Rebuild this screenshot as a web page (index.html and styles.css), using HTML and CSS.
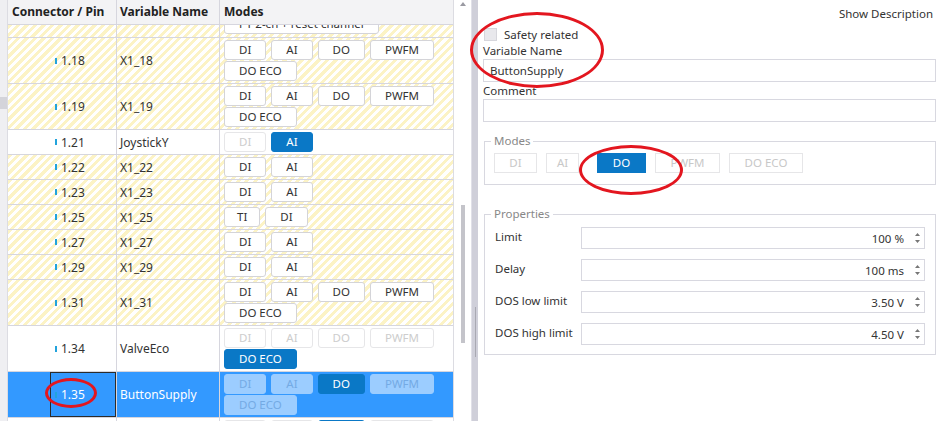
FILE: index.html
```html
<!DOCTYPE html>
<html>
<head>
    <title>IO Configuration</title>
    <link rel="stylesheet" href="styles.css">
</head>
<body>
    <div class="app">
        <div class="edge"><span class="edge-mark"></span></div>

        <!-- Pin table -->
        <div class="grid">
            <div class="head">
                <div>Connector / Pin</div>
                <div>Variable Name</div>
                <div>Modes</div>
            </div>

            <div class="row stripe cut">
                <div class="gap"></div>
                <div class="pin"></div>
                <div class="name"></div>
                <div class="modes"><span class="btn">PT 2-ch + reset channel</span></div>
            </div>

            <div class="row stripe">
                <div class="gap"></div>
                <div class="pin"><i class="tick"></i>1.18</div>
                <div class="name">X1_18</div>
                <div class="modes">
                    <span class="btn">DI</span><span class="btn">AI</span><span class="btn">DO</span><span class="btn">PWFM</span><span class="btn">DO ECO</span>
                </div>
            </div>

            <div class="row stripe">
                <div class="gap"></div>
                <div class="pin"><i class="tick"></i>1.19</div>
                <div class="name">X1_19</div>
                <div class="modes">
                    <span class="btn">DI</span><span class="btn">AI</span><span class="btn">DO</span><span class="btn">PWFM</span><span class="btn">DO ECO</span>
                </div>
            </div>

            <div class="row">
                <div class="gap"></div>
                <div class="pin"><i class="tick"></i>1.21</div>
                <div class="name">JoystickY</div>
                <div class="modes">
                    <span class="btn off">DI</span><span class="btn on">AI</span>
                </div>
            </div>

            <div class="row stripe">
                <div class="gap"></div>
                <div class="pin"><i class="tick"></i>1.22</div>
                <div class="name">X1_22</div>
                <div class="modes"><span class="btn">DI</span><span class="btn">AI</span></div>
            </div>

            <div class="row stripe">
                <div class="gap"></div>
                <div class="pin"><i class="tick"></i>1.23</div>
                <div class="name">X1_23</div>
                <div class="modes"><span class="btn">DI</span><span class="btn">AI</span></div>
            </div>

            <div class="row stripe">
                <div class="gap"></div>
                <div class="pin"><i class="tick"></i>1.25</div>
                <div class="name">X1_25</div>
                <div class="modes"><span class="btn narrow">TI</span><span class="btn">DI</span></div>
            </div>

            <div class="row stripe">
                <div class="gap"></div>
                <div class="pin"><i class="tick"></i>1.27</div>
                <div class="name">X1_27</div>
                <div class="modes"><span class="btn">DI</span><span class="btn">AI</span></div>
            </div>

            <div class="row stripe">
                <div class="gap"></div>
                <div class="pin"><i class="tick"></i>1.29</div>
                <div class="name">X1_29</div>
                <div class="modes"><span class="btn">DI</span><span class="btn">AI</span></div>
            </div>

            <div class="row stripe">
                <div class="gap"></div>
                <div class="pin"><i class="tick"></i>1.31</div>
                <div class="name">X1_31</div>
                <div class="modes">
                    <span class="btn">DI</span><span class="btn">AI</span><span class="btn">DO</span><span class="btn">PWFM</span><span class="btn">DO ECO</span>
                </div>
            </div>

            <div class="row">
                <div class="gap"></div>
                <div class="pin"><i class="tick"></i>1.34</div>
                <div class="name">ValveEco</div>
                <div class="modes">
                    <span class="btn off">DI</span><span class="btn off">AI</span><span class="btn off">DO</span><span class="btn off">PWFM</span><span class="btn on">DO ECO</span>
                </div>
            </div>

            <div class="row sel">
                <div class="gap"></div>
                <div class="pin"><i class="tick"></i>1.35</div>
                <div class="name">ButtonSupply</div>
                <div class="modes">
                    <span class="btn faded">DI</span><span class="btn faded">AI</span><span class="btn on">DO</span><span class="btn faded">PWFM</span><span class="btn faded">DO ECO</span>
                </div>
            </div>

            <div class="row">
                <div class="gap"></div>
                <div class="pin"><i class="tick"></i>1.36</div>
                <div class="name">X1_36</div>
                <div class="modes">
                    <span class="btn off">DI</span><span class="btn off">AI</span><span class="btn on">DO</span><span class="btn off">PWFM</span>
                </div>
            </div>
        </div>

        <div class="vscroll">
            <svg class="up" width="6" height="4" viewBox="0 0 6 4"><path d="M0 4 L3 0 L6 4 Z" fill="#9a9aa2"/></svg>
            <span class="thumb"></span>
        </div>

        <div class="splitter"><span class="grip"></span></div>

        <!-- Details of selected pin -->
        <div class="details">
            <div class="show-desc">Show Description</div>
            <div class="check"><span class="box"></span>Safety related</div>
            <div class="label">Variable Name</div>
            <div class="input">ButtonSupply</div>
            <div class="label">Comment</div>
            <div class="input"></div>

            <fieldset class="group modes-group">
                <legend>Modes</legend>
                <div class="mode-btns">
                    <span class="mbtn w-di">DI</span>
                    <span class="mbtn w-ai">AI</span>
                    <span class="mbtn w-do on">DO</span>
                    <span class="mbtn w-pwfm">PWFM</span>
                    <span class="mbtn w-eco">DO ECO</span>
                </div>
            </fieldset>

            <fieldset class="group props">
                <legend>Properties</legend>
                <div class="prop">
                    <span class="prop-label">Limit</span>
                    <div class="spin"><span class="val">100 %</span><svg width="7" height="14" viewBox="0 0 7 14"><path d="M1 5 L3.5 2 L6 5 Z M1 9 L3.5 12 L6 9 Z" fill="#777"/></svg></div>
                </div>
                <div class="prop">
                    <span class="prop-label">Delay</span>
                    <div class="spin"><span class="val">100 ms</span><svg width="7" height="14" viewBox="0 0 7 14"><path d="M1 5 L3.5 2 L6 5 Z M1 9 L3.5 12 L6 9 Z" fill="#777"/></svg></div>
                </div>
                <div class="prop">
                    <span class="prop-label">DOS low limit</span>
                    <div class="spin"><span class="val">3.50 V</span><svg width="7" height="14" viewBox="0 0 7 14"><path d="M1 5 L3.5 2 L6 5 Z M1 9 L3.5 12 L6 9 Z" fill="#777"/></svg></div>
                </div>
                <div class="prop">
                    <span class="prop-label">DOS high limit</span>
                    <div class="spin"><span class="val">4.50 V</span><svg width="7" height="14" viewBox="0 0 7 14"><path d="M1 5 L3.5 2 L6 5 Z M1 9 L3.5 12 L6 9 Z" fill="#777"/></svg></div>
                </div>
            </fieldset>
        </div>

        <!-- Red annotation marks -->
        <span class="mark mark-name"></span>
        <span class="mark mark-do"></span>
        <span class="mark mark-pin"></span>
    </div>
</body>
</html>
```

FILE: styles.css
```css
* {
    box-sizing: border-box;
}
body {
    margin: 0;
    font-family: "Noto Sans", "Open Sans", sans-serif;
    font-size: 11.5px;
    color: #333;
    background: #fff;
}
.app {
    position: relative;
    display: flex;
    height: 421px;
    overflow: hidden;
}
.edge {
    width: 8px;
    flex-shrink: 0;
    background: #efeff2;
    border-right: 1px solid #dcdce2;
    padding-top: 97px;
}
.edge-mark {
    display: block;
    width: 7px;
    height: 12px;
    background: #d4d4da;
}

/* Table */
.grid {
    width: 446px;
    flex-shrink: 0;
    border-right: 1px solid #dcdce2;
    overflow: hidden;
}
.head {
    display: grid;
    grid-template-columns: 109px 103px 1fr;
    height: 25px;
    background: #f3f3f5;
    border-bottom: 1px solid #d6d6de;
    font-weight: bold;
    font-size: 12px;
    color: #222;
}
.head div {
    padding: 0 4px;
    line-height: 23px;
    border-right: 1px solid #d6d6de;
}
.head div:nth-child(2) {
    padding-left: 3px;
}
.head div:last-child {
    border-right: none;
}
.row {
    display: grid;
    grid-template-columns: 42px 67px 103px 1fr;
    border-bottom: 1px solid #d6d6de;
    background: #fff;
    font-size: 12px;
}
.row.stripe {
    background: repeating-linear-gradient(135deg, #fcf3c5 0 3px, #fff 3px 6px);
}
.row.cut {
    height: 13px;
    grid-template-rows: 12px;
    overflow: hidden;
}
.row.cut .modes {
    align-items: flex-end;
    align-content: flex-end;
    padding: 0 4px 3px;
}
.pin {
    display: flex;
    align-items: center;
    padding-left: 4px;
    border-right: 1px solid #d6d6de;
}
.tick {
    width: 2px;
    height: 6px;
    background: #22a3dc;
    margin: 0 4px 0 1px;
}
.name {
    display: flex;
    align-items: center;
    padding-left: 3px;
    border-right: 1px solid #d6d6de;
}
.modes {
    display: flex;
    flex-wrap: wrap;
    align-content: flex-start;
    gap: 1px 5px;
    padding: 2px 4px;
}
.btn {
    height: 20px;
    padding: 0 14px;
    border: 1px solid #d4d4d8;
    border-radius: 3px;
    background: #fff;
    color: #333;
    line-height: 18px;
    font-size: 11.5px;
    white-space: nowrap;
}
.btn.narrow {
    padding: 0 12px;
}
.btn.off {
    border-color: #e6e6e8;
    color: #cdcdcd;
}
.btn.on {
    background: #0a78c6;
    border-color: #0a78c6;
    color: #fff;
}
.btn.faded {
    background: #9ccdff;
    border-color: #9ccdff;
    color: #74aae4;
}
.row.sel {
    background: #3399ff;
    color: #fff;
}
.row.sel .pin {
    box-shadow: inset 0 0 0 1px #2b2b2b;
}

/* Scrollbar and splitter */
.vscroll {
    width: 17px;
    flex-shrink: 0;
    display: flex;
    flex-direction: column;
    padding: 2px 0 0 6px;
}
.thumb {
    display: block;
    width: 4px;
    height: 138px;
    margin: 199px 0 0 1px;
    background: #c4c4ca;
}
.splitter {
    width: 7px;
    flex-shrink: 0;
    background: #cfcfd9;
    border-left: 1px solid #e0e0e8;
    padding: 307px 0 0 3px;
}
.grip {
    display: block;
    width: 1px;
    height: 50px;
    background: #a9a9b2;
}

/* Details panel */
.details {
    flex: 1;
    padding: 6px 5px 0 5px;
}
.show-desc {
    text-align: right;
    line-height: 16px;
    padding-right: 3px;
}
.check {
    display: flex;
    align-items: center;
    height: 15px;
    margin-top: 5px;
    line-height: 15px;
}
.box {
    width: 13px;
    height: 13px;
    margin: 0 7px 0 1px;
    background: #e8e8ec;
    border: 1px solid #d6d6dc;
}
.label {
    line-height: 16px;
    margin-top: 1px;
}
.input {
    height: 23px;
    border: 1px solid #d8d8e0;
    padding-left: 6px;
    line-height: 21px;
}
.group {
    margin: 12px 0 0 1px;
    border: 1px solid #d8d8e0;
    padding: 5px 9px 11px;
    min-width: 0;
}
.group legend {
    padding: 0 3px;
    margin-left: -3px;
    color: #888;
    line-height: 14px;
}
.mode-btns {
    display: flex;
}
.mbtn {
    height: 20px;
    border: 1px solid #e6e6e8;
    color: #c8c8c8;
    text-align: center;
    line-height: 18px;
    margin-right: 9px;
}
.mbtn.on {
    background: #0a78c6;
    border-color: #0a78c6;
    color: #fff;
}
.w-di { width: 43px; }
.w-ai { width: 33px; margin-right: 18px; }
.w-do { width: 49px; }
.w-pwfm { width: 65px; }
.w-eco { width: 74px; }
.props {
    margin-top: 22px;
    padding: 6px 10px 9px 9px;
}
.prop {
    display: flex;
    align-items: center;
    margin-bottom: 10px;
}
.prop:last-child {
    margin-bottom: 0;
}
.prop-label {
    width: 87px;
    flex-shrink: 0;
    padding-left: 1px;
    margin-top: -3px;
}
.spin {
    flex: 1;
    height: 22px;
    display: flex;
    align-items: center;
    justify-content: flex-end;
    border: 1px solid #d8d8e0;
    padding-right: 3px;
}
.spin .val {
    margin-right: 10px;
}

/* Annotation ellipses */
.mark {
    position: absolute;
    border: 3px solid #e3161f;
    border-radius: 50%;
}
.mark-name {
    left: 470px;
    top: 12px;
    width: 134px;
    height: 76px;
}
.mark-do {
    left: 579px;
    top: 145px;
    width: 104px;
    height: 50px;
}
.mark-pin {
    left: 45px;
    top: 378px;
    width: 52px;
    height: 30px;
}
```
